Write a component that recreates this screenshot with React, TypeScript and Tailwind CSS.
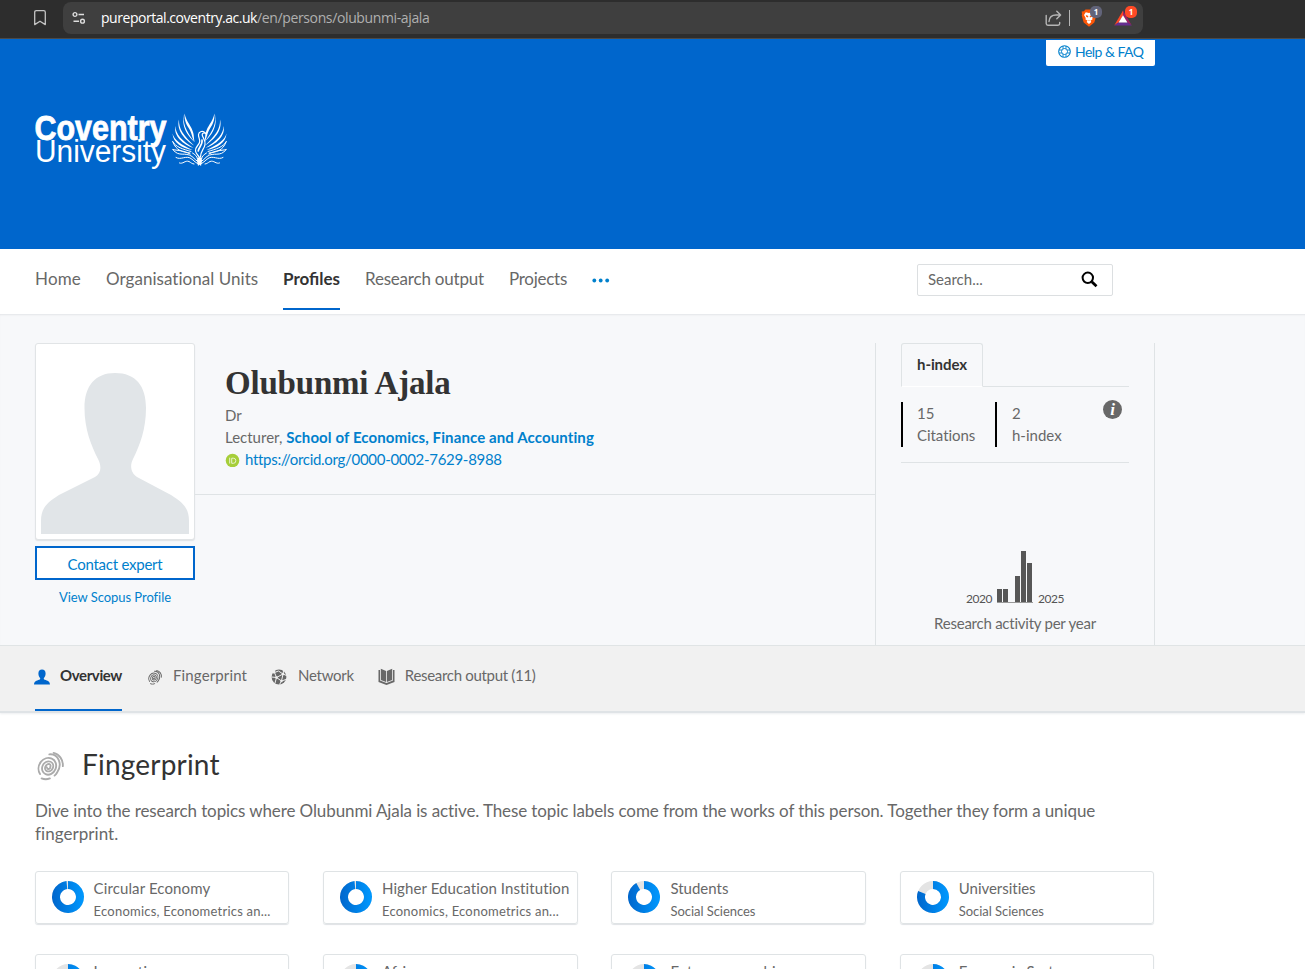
type Topic = { name: string; area: string; value: number; nameClass: string; areaClass: string };

const topics: Topic[] = [
  { name: 'Circular Economy', area: 'Economics, Econometrics an...', value: 0.985, nameClass: 'tracking-[0.11px]', areaClass: 'tracking-[0.22px]' },
  { name: 'Higher Education Institution', area: 'Economics, Econometrics an...', value: 0.985, nameClass: 'tracking-[0.09px]', areaClass: 'tracking-[0.22px]' },
  { name: 'Students', area: 'Social Sciences', value: 0.92, nameClass: '', areaClass: 'tracking-[-0.04px]' },
  { name: 'Universities', area: 'Social Sciences', value: 0.81, nameClass: 'tracking-[-0.03px]', areaClass: 'tracking-[-0.04px]' },
  { name: 'Innovation', area: 'Economics, Econometrics an...', value: 0.6, nameClass: '', areaClass: 'tracking-[0.22px]' },
  { name: 'Africa', area: 'Economics, Econometrics an...', value: 0.6, nameClass: '', areaClass: 'tracking-[0.22px]' },
  { name: 'Entrepreneurship', area: 'Economics, Econometrics an...', value: 0.58, nameClass: '', areaClass: 'tracking-[0.22px]' },
  { name: 'Economic System', area: 'Economics, Econometrics an...', value: 0.55, nameClass: '', areaClass: 'tracking-[0.22px]' },
];

function Donut({ value, id }: { value: number; id: string }) {
  const a = value * 2 * Math.PI;
  const x = (r: number) => 16 + r * Math.sin(a);
  const y = (r: number) => 16 - r * Math.cos(a);
  const big = value > 0.5 ? 1 : 0;
  return (
    <svg width="32" height="32" viewBox="0 0 32 32" className="shrink-0">
      <defs>
        <linearGradient id={id} gradientUnits="userSpaceOnUse" x1="0" y1="0" x2="32" y2="0">
          <stop offset="0" stopColor="#0066cc" />
          <stop offset="1" stopColor="#0099ff" />
        </linearGradient>
      </defs>
      <circle cx="16" cy="16" r="12" fill="none" stroke="#e4e4e4" strokeWidth="8" />
      <path
        d={`M16 0A16 16 0 ${big} 1 ${x(16)} ${y(16)}L${x(8)} ${y(8)}A8 8 0 ${big} 0 16 8Z`}
        fill={`url(#${id})`}
      />
    </svg>
  );
}

function FingerprintIcon({ size, color, weight }: { size: number; color: string; weight: number }) {
  return (
    <svg width={size} height={size} viewBox="0 0 30 30" fill="none" stroke={color} strokeWidth={weight} strokeLinecap="round" className="shrink-0">
      <g transform="translate(13.200 16) rotate(22)">
        <path d="M-1.200 1.500A1.600 1.800 0 0 0 1.600 -0.400A1.600 1.800 0 0 0 0 -2.400A2.900 3.600 0 0 0 0 4.800A4.300 4.900 0 0 0 0 -5A5.700 6.500 0 0 0 0 8A7 8 0 0 0 0 -8.200A8.600 9.800 0 0 0 -5 9.900" />
        <path d="M-3.800 -11.200A9.800 11.400 0 0 1 9.800 2A11 11 0 0 1 8.600 6" />
        <path d="M-0.500 -14A12 13 0 0 1 12.600 -5.500" />
        <path d="M-2 13.200A10 10 0 0 0 5.400 10.200" />
      </g>
    </svg>
  );
}

function Phoenix() {
  const wing = (
    <g>
      <path d="M12.5 0.5C10 9 13.500 17 22.500 29C16 23 8.300 13 12.5 0.5Z" />
      <path d="M12.5 0.5C14.500 9.500 19.500 12.500 21.300 20C22 23 21.800 25 22.500 29C20 25 20 20 17 15.500C14 11 12.300 7 12.5 0.5Z" />
      <path d="M7 6.500C6.500 16 12 23 22 32.500C13 27 4 17 7 6.500Z" />
      <path d="M3.300 13C3.600 21 10 28 21.500 35C11 31.500 1.500 23 3.300 13Z" />
      <path d="M0.500 20.500C2.500 27.500 9 31.500 20.500 37C10 35.500 1 29.500 0.500 20.500Z" />
    </g>
  );
  const curls = (
    <g fill="none" stroke="white" strokeWidth="1" strokeLinecap="round">
      <path d="M0.600 28.500C4 34.500 11 36 19 38.500" />
      <path d="M1 29C4 38 11 39 18 40" />
      <path d="M0.800 36.500C7 38 11 37 18 41" />
      <path d="M1.200 37C7 44.500 13 38.500 20 43.500C23 46 24.500 48.500 27.500 49" />
      <path d="M4 44.500C9 47.500 14 42 19 45.500C22 47.500 24 50.500 27 51" />
      <path d="M7.500 50C11 51.500 13 47 17 48.500C19 49.500 20 51 22 51" />
      <path d="M20.500 40C23 41.500 25 43 25.500 46" />
    </g>
  );
  return (
    <g fill="white">
      {wing}
      {curls}
      <g transform="matrix(-1 0 0 1 55 0)">
        {wing}
        {curls}
      </g>
      <g fill="none" stroke="white" strokeLinecap="round">
        <path d="M33.300 20C31 17 26.800 18.500 26.500 21.500C26.200 24.500 28.500 26.500 27.500 29.500C26.500 32.500 23 34 23.500 38C24 41 26 42 27.500 44.500" strokeWidth="1.200" />
        <path d="M33.300 20.300C31.500 19.500 30.200 20.300 30.200 21.800C30.300 24.500 33.800 26.500 33 31.500C32.300 36 28.500 38 28.500 44" strokeWidth="1.200" />
        <path d="M30 27C31 31 27 34 26.200 38" strokeWidth="1.600" />
        <path d="M33 19.800L34.500 21.800" strokeWidth="1" />
      </g>
      <path d="M25.500 44.500H29.500L30 48L29 53L27.500 51.500L26 53L25 48Z" />
    </g>
  );
}

function Logo() {
  return (
    <svg width="194" height="60" viewBox="0 0 194 60" className="block">
      <g fill="white" fontFamily="'Liberation Sans', Arial, sans-serif">
        <text x="-0.5" y="31" fontSize="34.500" fontWeight="700" stroke="white" strokeWidth="0.8" textLength="132" lengthAdjust="spacingAndGlyphs">Coventry</text>
        <text x="0" y="52.500" fontSize="31" textLength="131" lengthAdjust="spacingAndGlyphs">University</text>
      </g>
      <g transform="translate(137 4)">
        <Phoenix />
      </g>
    </svg>
  );
}

function BrowserBar() {
  return (
    <div className="flex h-[39px] items-start border-b border-[#4a4a4a] bg-[#2d2d2d] pt-[2px] pl-[33px]">
      <svg width="14" height="18" viewBox="0 0 14 18" className="mt-[7px] block" fill="none" stroke="#c4c4c4" strokeWidth="1.3">
        <path d="M1.700 3.200Q1.700 1.600 3.300 1.600H10.700Q12.300 1.600 12.300 3.200V15.600L7 12.200L1.700 15.600Z" strokeLinejoin="round" />
      </svg>
      <div className="ml-[16px] flex h-[32px] w-[1080px] items-center rounded-[8px] bg-[#3f3f3f] pr-[11px] pl-[9px]">
        <svg width="14" height="14" viewBox="0 0 14 14" fill="none" stroke="#dedede" strokeWidth="1.4">
          <circle cx="3" cy="3.500" r="1.900" />
          <path d="M6.500 3.500H12M1.500 10.200H7" />
          <circle cx="10.500" cy="10.200" r="1.900" />
        </svg>
        <div className="ml-[15px] font-['Open_Sans','Noto_Sans',sans-serif] text-[14px] leading-[20px] whitespace-nowrap">
          <span className="tracking-[-0.46px] text-white">pureportal.coventry.ac.uk</span>
          <span className="tracking-[-0.37px] text-[#b0b0b0]">/en/persons/olubunmi-ajala</span>
        </div>
        <div className="ml-auto flex items-center">
          <svg width="17" height="17" viewBox="0 0 17 17" fill="none" stroke="#b5b5b5" strokeWidth="1.400" strokeLinecap="round" strokeLinejoin="round">
            <path d="M1.200 5.500V13.500Q1.200 15.200 2.900 15.200H13Q14.700 15.200 14.700 13.500V12.500" />
            <path d="M4 11.500Q4.500 5 11 5H15.500M11.800 1.300L15.600 5L11.800 8.700" />
          </svg>
          <div className="ml-[7px] h-[16px] w-px bg-[#b5b5b5]" />
          <div className="relative ml-[11px] h-[18px] w-[16px]">
            <svg width="16" height="18" viewBox="0 0 16 18">
              <path d="M4.500 0.500H11.500L13.200 2.200L15.300 2.500L15 5.500L15.300 6.500L13.300 13.500L8 17.700L2.700 13.500L0.700 6.500L1 5.500L0.700 2.500L2.800 2.200Z" fill="#fb5607" />
              <path d="M4.800 3.200L8 4L11.200 3.200L13 6L11.300 9L11.500 10.500L9.500 11.500L10.300 13L8 15L5.700 13L6.500 11.500L4.500 10.500L4.700 9L3 6Z" fill="white" />
              <path d="M4.800 6L7.300 7L7 8.500L5.200 7.800ZM11.200 6L8.700 7L9 8.500L10.800 7.800ZM7 11L8 11.700L9 11" fill="#fb5607" />
            </svg>
            <div className="absolute -top-[3px] left-[9px] flex h-[12px] w-[12px] items-center justify-center rounded-[5px] bg-[#62647a] font-['Open_Sans',sans-serif] text-[8px] font-bold text-white">1</div>
          </div>
          <div className="relative ml-[17px] h-[16px] w-[18px]">
            <svg width="18" height="16" viewBox="0 0 18 16">
              <path d="M9 0.500L9 5.500L4.700 12.200L0.200 15.500Z" fill="#ff4724" />
              <path d="M9 0.500L17.800 15.500L13.300 12.200L9 5.500Z" fill="#9e1f63" />
              <path d="M0.200 15.500L4.700 12.200H13.300L17.800 15.500Z" fill="#662d91" />
              <path d="M9 5.300L13.400 12.400H4.600Z" fill="white" />
            </svg>
            <div className="absolute -top-[4px] left-[11px] flex h-[12px] w-[12px] items-center justify-center rounded-[5px] bg-[#ff4a26] font-['Open_Sans',sans-serif] text-[8px] font-bold text-white">1</div>
          </div>
        </div>
      </div>
    </div>
  );
}

function Hero() {
  return (
    <section className="flex h-[332px] border-b border-[#dfe3e5] bg-[#f7f8fa] pt-[29px] pl-[35px] shadow-[inset_0_2px_2px_-1px_#e3e5e8]">
      <div className="flex w-[160px] flex-col">
        <div className="h-[197px] rounded-[3px] border border-[#e1e4e6] bg-white px-[5px] pt-[28px] shadow-[0_1px_1px_#dfe2e5]">
          <svg width="148" height="162" viewBox="0 0 148 162" className="block">
            <path d="M74 1C95 1 105 14 105 36C105 57 99 73 92 87C88 95 91 102 96 105L130 123C143 131 148 137 148 149V162H0V149C0 137 5 131 18 123L54 105C60 101 61 95 57 87C50 73 43.500 57 43.500 36C43.500 14 54 1 74 1Z" fill="#e1e5e8" />
          </svg>
        </div>
        <button className="mt-[6px] h-[34px] border-2 border-[#0066cc] bg-white pt-[2px] text-[15px] leading-[26px] tracking-[-0.24px] text-[#0080cc]">Contact expert</button>
        <a className="mt-[7px] text-center text-[13px] leading-[20px] tracking-[-0.05px] text-[#0080cc]">View Scopus Profile</a>
      </div>
      <div className="h-[152px] w-[680px] border-b border-[#dfe3e5] pt-[22px] pl-[30px] text-[15px] leading-[22px] text-[#686868]">
        <h1 className="mb-[3px] font-['Liberation_Serif',serif] text-[33px] leading-[37px] font-bold tracking-[-0.2px] text-[#333]">Olubunmi Ajala</h1>
        <p className="-mt-px">Dr</p>
        <p>
          Lecturer, <a className="font-bold tracking-[0.11px] text-[#0080cc]">School of Economics, Finance and Accounting</a>
        </p>
        <p className="flex items-center tracking-[-0.3px] text-[#0080cc]">
          <svg width="15" height="15" viewBox="0 0 15 15" className="mr-[5px]">
            <circle cx="7.500" cy="8.500" r="6.800" fill="#a6ce39" />
            <path d="M4.700 5.700V11.500M6.700 6.200V11.300H8.300A2.500 2.500 0 0 0 8.300 6.200Z" fill="none" stroke="#e9f3cf" strokeWidth="1" />
          </svg>
          https://orcid.org/0000-0002-7629-8988
        </p>
      </div>
      <div className="flex w-[280px] flex-col border-x border-[#dfe3e5] px-[25px] text-[15px] text-[#686868]">
        <div className="flex h-[44px]">
          <div className="w-[82px] rounded-t-[3px] border border-[#dfe3e5] border-b-white pl-[15px] leading-[41px] font-bold tracking-[-0.08px] text-[#333]">h-index</div>
          <div className="flex-1 border-b border-[#dfe3e5]" />
        </div>
        <div className="mt-[15px] flex h-[61px] items-start border-b border-[#dfe3e5]">
          <div className="h-[45px] w-[94px] border-l-2 border-black pl-[14px] leading-[22px] tracking-[-0.05px]">
            <div>15</div>
            <div>Citations</div>
          </div>
          <div className="h-[45px] border-l-2 border-black pl-[15px] leading-[22px]">
            <div>2</div>
            <div>h-index</div>
          </div>
          <div className="mt-[-2px] mr-[7px] ml-auto flex h-[19px] w-[19px] items-center justify-center rounded-full bg-[#686868] font-['Liberation_Serif',serif] text-[17px] leading-[19px] font-bold text-white italic">i</div>
        </div>
        <div className="mt-[86px] flex h-[54px] items-end justify-center text-[12px] leading-[14px] tracking-[-0.46px] text-[#555]">
          <span className="mr-[5px] -mb-[3px]">2020</span>
          <div className="flex h-[52px] w-[36px] items-end gap-px border-b border-[#999]">
            <div className="h-[13px] w-[5px] bg-[#575757]" />
            <div className="h-[13px] w-[5px] bg-[#575757]" />
            <div className="h-0 w-[5px]" />
            <div className="h-[26px] w-[5px] bg-[#575757]" />
            <div className="h-[51px] w-[5px] bg-[#575757]" />
            <div className="h-[39px] w-[5px] bg-[#575757]" />
          </div>
          <span className="-mb-[3px] ml-[5px]">2025</span>
        </div>
        <div className="mt-[9px] text-center leading-[22px] tracking-[-0.24px]">Research activity per year</div>
      </div>
    </section>
  );
}

function Tabs() {
  return (
    <nav className="flex h-[67px] gap-[25px] border-b-2 border-[#dfe3e6] bg-[#f1f1f1] pl-[35px] text-[15px] leading-[59px] text-[#686868] shadow-[0_1px_2px_#eceef0]">
      <a className="flex h-[65px] border-b-2 border-[#0066cc] font-bold tracking-[-0.38px] text-[#333]">
        <svg width="16" height="16" viewBox="0 0 16 16" className="mt-[23px] mr-[10px] -ml-[1px]">
          <path d="M8 0.500C10.300 0.500 11.600 2 11.600 4.500C11.600 6.500 10.800 8.200 9.800 9.200C9.700 10 10 10.400 10.800 10.700C13.500 11.600 15.800 12.200 16 15.500H0C0.200 12.200 2.500 11.600 5.200 10.700C6 10.400 6.300 10 6.200 9.200C5.200 8.200 4.400 6.500 4.400 4.500C4.400 2 5.700 0.500 8 0.500Z" fill="#0066cc" />
        </svg>
        Overview
      </a>
      <a className="flex tracking-[0.13px]">
        <span className="mt-[23px] mr-[10px]"><FingerprintIcon size={16} color="#686868" weight={1.7} /></span>
        Fingerprint
      </a>
      <a className="flex tracking-[-0.28px]">
        <svg width="16" height="16" viewBox="0 0 16 16" className="mt-[23px] mr-[10px] -ml-px">
          <circle cx="8" cy="8" r="7.400" fill="#686868" />
          <g stroke="#f1f1f1" strokeWidth="1" fill="none">
            <path d="M0.500 8L5.500 8.500L12 5L15.500 6.500M5.500 8.500L3.500 3.500M5.500 8.500L10.500 12L12 5L7.500 2L3.500 3.500M5.500 8.500L4 14M10.500 12L15 10.500M10.500 12L8.500 15.500M12 5L12.500 2" />
          </g>
          <g fill="#f1f1f1">
            <circle cx="5.500" cy="8.500" r="1.300" /><circle cx="12" cy="5" r="1.300" /><circle cx="10.500" cy="12" r="1.200" /><circle cx="2.800" cy="3" r="1.500" />
          </g>
        </svg>
        <span className="ml-px">Network</span>
      </a>
      <a className="flex tracking-[-0.31px]">
        <svg width="17" height="17" viewBox="0 0 17 17" className="mt-[22px] mr-[10px] -ml-px">
          <path d="M0.500 2H2V12.500L8.500 15L15 12.500V2H16.500V14L8.500 17L0.500 14Z" fill="#686868" />
          <path d="M2.800 0.800L8.100 3V14L2.800 11.900ZM14.200 0.800L8.900 3V14L14.200 11.900Z" fill="#686868" />
        </svg>
        Research output (11)
      </a>
    </nav>
  );
}

export default function App() {
  return (
    <div className="h-[969px] w-[1305px] overflow-hidden bg-white font-['Lato',sans-serif] text-[#686868]">
      <BrowserBar />
      <header className="flex h-[210px] items-start bg-[#0066cc] pl-[35px]">
        <div className="mt-[70px]"><Logo /></div>
        <a className="mt-px ml-[817px] flex h-[26px] w-[109px] items-center rounded-b-[2px] bg-white pb-[3px] pl-[12px] text-[14px] tracking-[-0.53px] whitespace-nowrap text-[#0080cc]">
          <svg width="13" height="13" viewBox="0 0 13 13" fill="none" stroke="#0080cc" className="mr-[4px]">
            <circle cx="6.500" cy="6.500" r="5.800" strokeWidth="1.100" />
            <circle cx="6.500" cy="6.500" r="3" strokeWidth="1" />
            <path d="M5 1V3.800M8 1V3.800M5 9.200V12M8 9.200V12M1 5H3.800M1 8H3.800M9.200 5H12M9.200 8H12" strokeWidth="0.900" />
          </svg>
          Help &amp; FAQ
        </a>
      </header>
      <nav className="flex h-[65px] pl-[35px] text-[17px] leading-[59px]">
        <a className="w-[71px] tracking-[0.17px]">Home</a>
        <a className="w-[177px] tracking-[0.04px]">Organisational Units</a>
        <a className="h-[61px] w-[57px] border-b-2 border-[#0066cc] font-bold text-[#333]">Profiles</a>
        <a className="ml-[25px] w-[144px] tracking-[-0.2px]">Research output</a>
        <a className="w-[83px] tracking-[-0.27px]">Projects</a>
        <svg width="18" height="5" viewBox="0 0 18 5" className="mt-[29px]" fill="#0080cc">
          <circle cx="2.300" cy="2.500" r="1.900" /><circle cx="8.700" cy="2.500" r="1.900" /><circle cx="15.200" cy="2.500" r="1.900" />
        </svg>
        <div className="mt-[15px] ml-[307px] flex h-[32px] w-[196px] items-center rounded-[2px] border border-[#dcdfe1] pr-[14px] pb-[2px] pl-[10px] text-[15px] leading-[28px]">
          Search...
          <svg width="17" height="17" viewBox="0 0 17 17" className="ml-auto" fill="none" stroke="black">
            <circle cx="6.800" cy="6.800" r="5.200" strokeWidth="2" />
            <path d="M10.800 10.800L15.500 15.300" strokeWidth="2.800" />
          </svg>
        </div>
      </nav>
      <Hero />
      <Tabs />
      <main className="pl-[35px]">
        <div className="mt-[35px] flex h-[32px] items-center text-[28px] leading-[32px] tracking-[0.2px] text-[#333]">
          <span className="mt-[3px] mr-[16px]"><FingerprintIcon size={31} color="#ababab" weight={1.8} /></span>
          <h2>Fingerprint</h2>
        </div>
        <p className="mt-[19px] w-[1120px] text-[17px] leading-[23px] tracking-[-0.102px]">
          Dive into the research topics where Olubunmi Ajala is active. These topic labels come from the works of this person. Together they form a unique<br />
          <span className="tracking-[0.05px]">fingerprint.</span>
        </p>
        <div className="mt-[26px] -ml-[0.4px] grid w-[1119.8px] grid-cols-4 gap-x-[33.8px] gap-y-[30px]">
          {topics.map((t, i) => (
            <div key={t.name} className="flex h-[53px] rounded-[3px] border border-[#dfe3e5] pt-[9px] pl-[16px] whitespace-nowrap shadow-[0_1px_1px_#dfe2e5]">
              <Donut value={t.value} id={`ring-${i}`} />
              <div className="-mt-[4px] ml-[10px]">
                <div className={`text-[15px] leading-[23px] ${t.nameClass}`}>{t.name}</div>
                <div className={`text-[13px] leading-[22px] ${t.areaClass}`}>{t.area}</div>
              </div>
            </div>
          ))}
        </div>
      </main>
    </div>
  );
}
